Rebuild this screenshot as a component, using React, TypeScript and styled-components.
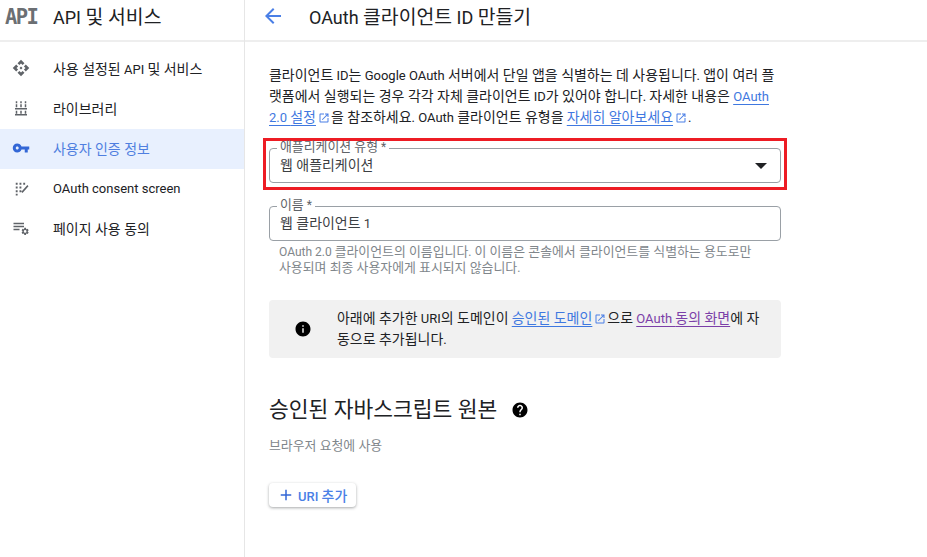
/**
 * OAuth client ID creation page (API & Services console)
 */
import React from 'react';
import styled, { createGlobalStyle } from 'styled-components';

const GlobalStyle = createGlobalStyle`
  html, body {
    margin: 0;
    padding: 0;
    background: #fff;
    overflow: hidden;
  }
  body {
    font-family: Roboto, "Noto Sans CJK KR", "Liberation Sans", sans-serif;
    color: #202124;
  }
`;

// Hangul in the reference runs wider than the Latin next to it
const Hangul = styled.span`
  font-size: 1.075em;
`;

const Ko: React.FC<{ children: string }> = ({ children }) => (
  <>
    {children.split(/([가-힣]+(?:\s+[가-힣]+)*)/).map((part, i) =>
      i % 2 === 1 ? <Hangul key={i}>{part}</Hangul> : part
    )}
  </>
);

const Shell = styled.div`
  display: grid;
  grid-template-columns: 245px 1fr;
  width: 927px;
  height: 557px;
`;

const Sidebar = styled.aside`
  border-right: 1px solid #e6e6e6;
  display: flex;
  flex-direction: column;
`;

const HeaderBar = styled.header`
  height: 31px;
  border-bottom: 2px solid #eeeeee;
  display: flex;
  align-items: center;
`;

const Brand = styled(HeaderBar)`
  padding: 0 1px 9px 5px;
  margin-bottom: 7px;
`;

const BrandMark = styled.span`
  width: 48px;
  font-family: "DejaVu Sans Mono", "Liberation Mono", monospace;
  font-size: 20.5px;
  font-weight: 700;
  letter-spacing: -1.6px;
  color: #6b6f73;
  margin-top: 3px;
`;

const BrandTitle = styled.span`
  font-size: 18px;
  color: #202124;
`;

const NavRow = styled.div<{ $active?: boolean }>`
  height: 40px;
  box-sizing: border-box;
  padding: 0 0 2px 12px;
  display: flex;
  align-items: center;
  font-size: 13px;
  background: ${p => (p.$active ? '#e8f0fe' : 'transparent')};
  color: ${p => (p.$active ? '#4f7fe0' : '#202124')};
`;

const NavIcon = styled.svg<{ $active?: boolean }>`
  width: 18px;
  height: 18px;
  margin-right: 23px;
  flex: none;
  fill: ${p => (p.$active ? '#3367d6' : '#5f6368')};
`;

const Main = styled.main`
  display: flex;
  flex-direction: column;
`;

const TitleBar = styled(HeaderBar)`
  padding: 0 0 9px 16px;
`;

const BackIcon = styled.svg`
  width: 24px;
  height: 24px;
  margin-right: 24px;
  fill: #4a7fe6;
`;

const PageTitle = styled.h1`
  margin: 0;
  font-size: 18px;
  font-weight: 400;
  color: #202124;
`;

const Content = styled.div`
  width: 512px;
  margin-left: 24px;
  padding-top: 23px;
  display: flex;
  flex-direction: column;
`;

const Intro = styled.p`
  margin: 0;
  font-size: 13px;
  line-height: 20px;
  color: #202124;
  word-break: break-all;
`;

const DocLink = styled.a<{ $visited?: boolean }>`
  color: ${p => (p.$visited ? '#7b3fa8' : '#3f78e0')};
  text-decoration: underline;
  text-underline-offset: 3px;
`;

const ExternalIcon = styled.svg`
  width: 12px;
  height: 12px;
  margin: 0 1px 0 2px;
  vertical-align: -2px;
  fill: #4a7fe6;
`;

const Highlight = styled.div`
  margin: 10px -6px 0;
  padding: 1px 3px 4px;
  border: 3px solid #ed1c24;
`;

const Field = styled.fieldset`
  position: relative;
  margin: 0;
  padding: 0 10px;
  height: 41px;
  box-sizing: border-box;
  border: 1px solid #9aa0a6;
  border-radius: 4px;
  display: flex;
  align-items: center;
  min-width: 0;
`;

const Legend = styled.legend`
  margin-left: -3px;
  padding: 0 3px;
  height: 12px;
  font-size: 12px;
  line-height: 10px;
  color: #5f6368;
`;

const FieldValue = styled.div`
  flex: 1;
  font-size: 13px;
  line-height: 18px;
  margin-top: -5px;
  color: #3c4043;
`;

const DropArrow = styled.span`
  width: 0;
  height: 0;
  margin-right: 3px;
  margin-top: -5px;
  border-left: 6px solid transparent;
  border-right: 6px solid transparent;
  border-top: 6px solid #202124;
`;

const NameBlock = styled.div`
  margin-top: 10px;
`;

const Hint = styled.p`
  margin: 3px 0 0;
  padding: 0 24px 0 10px;
  font-size: 12px;
  line-height: 16px;
  color: #80868b;
`;

const Notice = styled.div`
  margin-top: 24px;
  height: 58px;
  box-sizing: border-box;
  background: #f1f1f1;
  border-radius: 4px;
  display: flex;
  align-items: center;
  padding: 0 20px 0 25px;
  font-size: 13px;
  line-height: 20px;
  color: #202124;
`;

const SolidIcon = styled.svg<{ $size: number }>`
  width: ${p => p.$size}px;
  height: ${p => p.$size}px;
  flex: none;
  fill: #000;
`;

const NoticeText = styled.div`
  margin-left: 25px;
  word-break: break-all;
`;

const SectionTitle = styled.h2`
  margin: 39px 0 0;
  display: flex;
  align-items: center;
  gap: 14px;
  font-size: 20px;
  line-height: 26px;
  font-weight: 400;
  color: #202124;
`;

const SectionNote = styled.p`
  margin: 15px 0 0;
  font-size: 12px;
  line-height: 16px;
  color: #80868b;
`;

const AddButton = styled.button`
  align-self: flex-start;
  margin-top: 29px;
  height: 24px;
  padding: 0 9px 0 8px;
  display: flex;
  align-items: center;
  gap: 3px;
  border: 0;
  border-radius: 4px;
  background: #fff;
  box-shadow: 0 1px 3px rgba(60, 64, 67, 0.45);
  font-family: inherit;
  font-size: 13px;
  font-weight: 500;
  color: #4a7fe6;
`;

const PlusIcon = styled.svg`
  width: 18px;
  height: 18px;
  fill: #3367d6;
`;

const ICONS: Record<string, React.ReactNode> = {
  api: (
    <path d="M14 12l-2 2-2-2 2-2 2 2zm-2-6l2.12 2.12 2.5-2.5L12 1 7.38 5.62l2.5 2.5L12 6zm-6 6l2.12-2.12-2.5-2.5L1 12l4.62 4.62 2.5-2.5L6 12zm12 0l-2.12 2.12 2.5 2.5L23 12l-4.62-4.62-2.5 2.5L18 12zm-6 6l-2.12-2.12-2.5 2.5L12 23l4.62-4.62-2.5-2.5L12 18z" />
  ),
  library: (
    <path d="M5 3h2v2.5H5zM11 3h2v2.5h-2zM17 3h2v2.5h-2zM5 7h2v4H5zM11 7h2v4h-2zM17 7h2v4h-2zM4 12h16v2H4zM5 15.5h2v4H5zM11 15.5h2v4h-2zM17 15.5h2v4h-2zM4 20h16v2H4z" />
  ),
  key: (
    <path d="M12.65 10C11.83 7.67 9.61 6 7 6c-3.31 0-6 2.69-6 6s2.69 6 6 6c2.61 0 4.83-1.67 5.65-4H17v4h4v-4h2v-4H12.65zM7 14c-1.1 0-2-.9-2-2s.9-2 2-2 2 .9 2 2-.9 2-2 2z" />
  ),
  consent: (
    <path d="M5 5h2.5v2.5H5zM10 5h2.5v2.5H10zM15 5h2.5v2.5H15zM5 10h2.5v2.5H5zM10 10h2.5v2.5H10zM5 15h2.5v2.5H5zM10 15h2.5v2.5H10zM5 19.5h2.5V22H5zM20.5 8l1.5 1.5-8 9-1.5-1.5z" />
  ),
  settings: (
    <>
      <path d="M2 5h14v2H2zM2 9h14v2H2zM2 13h8v2H2z" />
      <path
        transform="translate(11.5 10.5) scale(0.5)"
        d="M19.14 12.94c.04-.3.06-.61.06-.94s-.02-.64-.07-.94l2.03-1.58a.5.5 0 0 0 .12-.61l-1.92-3.32a.5.5 0 0 0-.59-.22l-2.39.96a7 7 0 0 0-1.62-.94l-.36-2.54a.48.48 0 0 0-.48-.41h-3.84a.47.47 0 0 0-.47.41l-.36 2.54c-.59.24-1.13.57-1.62.94l-2.39-.96a.48.48 0 0 0-.59.22L2.74 8.87a.47.47 0 0 0 .12.61l2.03 1.58c-.05.3-.09.63-.09.94s.02.64.07.94l-2.03 1.58a.5.5 0 0 0-.12.61l1.92 3.32c.12.22.37.29.59.22l2.39-.96c.5.38 1.03.7 1.62.94l.36 2.54c.05.24.24.41.48.41h3.84c.24 0 .44-.17.47-.41l.36-2.54c.59-.24 1.13-.56 1.62-.94l2.39.96c.22.08.47 0 .59-.22l1.92-3.32a.46.46 0 0 0-.12-.61l-2.01-1.58zM12 15.6A3.6 3.6 0 1 1 12 8.4a3.6 3.6 0 0 1 0 7.2z"
      />
    </>
  ),
};

const NAV_ITEMS = [
  { icon: 'api', label: '사용 설정된 API 및 서비스' },
  { icon: 'library', label: '라이브러리' },
  { icon: 'key', label: '사용자 인증 정보', active: true },
  { icon: 'consent', label: 'OAuth consent screen' },
  { icon: 'settings', label: '페이지 사용 동의' },
];

const External: React.FC = () => (
  <ExternalIcon viewBox="0 0 24 24">
    <path d="M19 19H5V5h7V3H5c-1.11 0-2 .9-2 2v14c0 1.1.89 2 2 2h14c1.1 0 2-.9 2-2v-7h-2v7zM14 3v2h3.59l-9.83 9.83 1.41 1.41L19 6.41V10h2V3h-7z" />
  </ExternalIcon>
);

const App: React.FC = () => (
  <>
    <GlobalStyle />
    <Shell>
      <Sidebar>
        <Brand>
          <BrandMark>API</BrandMark>
          <BrandTitle><Ko>API 및 서비스</Ko></BrandTitle>
        </Brand>
        {NAV_ITEMS.map(item => (
          <NavRow key={item.label} $active={item.active}>
            <NavIcon viewBox="0 0 24 24" $active={item.active}>
              {ICONS[item.icon]}
            </NavIcon>
            <span><Ko>{item.label}</Ko></span>
          </NavRow>
        ))}
      </Sidebar>

      <Main>
        <TitleBar>
          <BackIcon viewBox="0 0 24 24">
            <path d="M20 11H7.83l5.59-5.59L12 4l-8 8 8 8 1.41-1.41L7.83 13H20v-2z" />
          </BackIcon>
          <PageTitle><Ko>OAuth 클라이언트 ID 만들기</Ko></PageTitle>
        </TitleBar>

        <Content>
          <Intro>
            <Ko>클라이언트 ID는 Google OAuth 서버에서 단일 앱을 식별하는 데 사용됩니다. 앱이 여러 플랫폼에서 실행되는 경우 각각 자체 클라이언트 ID가 있어야 합니다. 자세한 내용은 </Ko>
            <DocLink><Ko>OAuth 2.0 설정</Ko></DocLink>
            <External /><Ko>을 참조하세요. OAuth 클라이언트 유형을 </Ko>
            <DocLink><Ko>자세히 알아보세요</Ko></DocLink>
            <External />.
          </Intro>

          <Highlight>
            <Field>
              <Legend><Ko>애플리케이션 유형 *</Ko></Legend>
              <FieldValue><Ko>웹 애플리케이션</Ko></FieldValue>
              <DropArrow />
            </Field>
          </Highlight>

          <NameBlock>
            <Field>
              <Legend><Ko>이름 *</Ko></Legend>
              <FieldValue><Ko>웹 클라이언트 1</Ko></FieldValue>
            </Field>
            <Hint>
              <Ko>OAuth 2.0 클라이언트의 이름입니다. 이 이름은 콘솔에서 클라이언트를 식별하는 용도로만 사용되며 최종 사용자에게 표시되지 않습니다.</Ko>
            </Hint>
          </NameBlock>

          <Notice>
            <SolidIcon viewBox="0 0 24 24" $size={18}>
              <path d="M12 2C6.48 2 2 6.48 2 12s4.48 10 10 10 10-4.48 10-10S17.52 2 12 2zm1 15h-2v-6h2v6zm0-8h-2V7h2v2z" />
            </SolidIcon>
            <NoticeText>
              <Ko>아래에 추가한 URI의 도메인이 </Ko><DocLink><Ko>승인된 도메인</Ko></DocLink>
              <External /><Ko>으로 </Ko><DocLink $visited><Ko>OAuth 동의 화면</Ko></DocLink><Ko>에 자동으로 추가됩니다.</Ko>
            </NoticeText>
          </Notice>

          <SectionTitle>
            <span><Ko>승인된 자바스크립트 원본</Ko></span>
            <SolidIcon viewBox="0 0 24 24" $size={18}>
              <path d="M12 2C6.48 2 2 6.48 2 12s4.48 10 10 10 10-4.48 10-10S17.52 2 12 2zm1 17h-2v-2h2v2zm2.07-7.75l-.9.92C13.45 12.9 13 13.5 13 15h-2v-.5c0-1.1.45-2.1 1.17-2.83l1.24-1.26c.37-.36.59-.86.59-1.41 0-1.1-.9-2-2-2s-2 .9-2 2H8c0-2.21 1.79-4 4-4s4 1.79 4 4c0 .88-.36 1.68-.93 2.25z" />
            </SolidIcon>
          </SectionTitle>
          <SectionNote><Ko>브라우저 요청에 사용</Ko></SectionNote>

          <AddButton>
            <PlusIcon viewBox="0 0 24 24">
              <path d="M19 13h-6v6h-2v-6H5v-2h6V5h2v6h6v2z" />
            </PlusIcon>
            <span><Ko>URI 추가</Ko></span>
          </AddButton>
        </Content>
      </Main>
    </Shell>
  </>
);

export default App;
